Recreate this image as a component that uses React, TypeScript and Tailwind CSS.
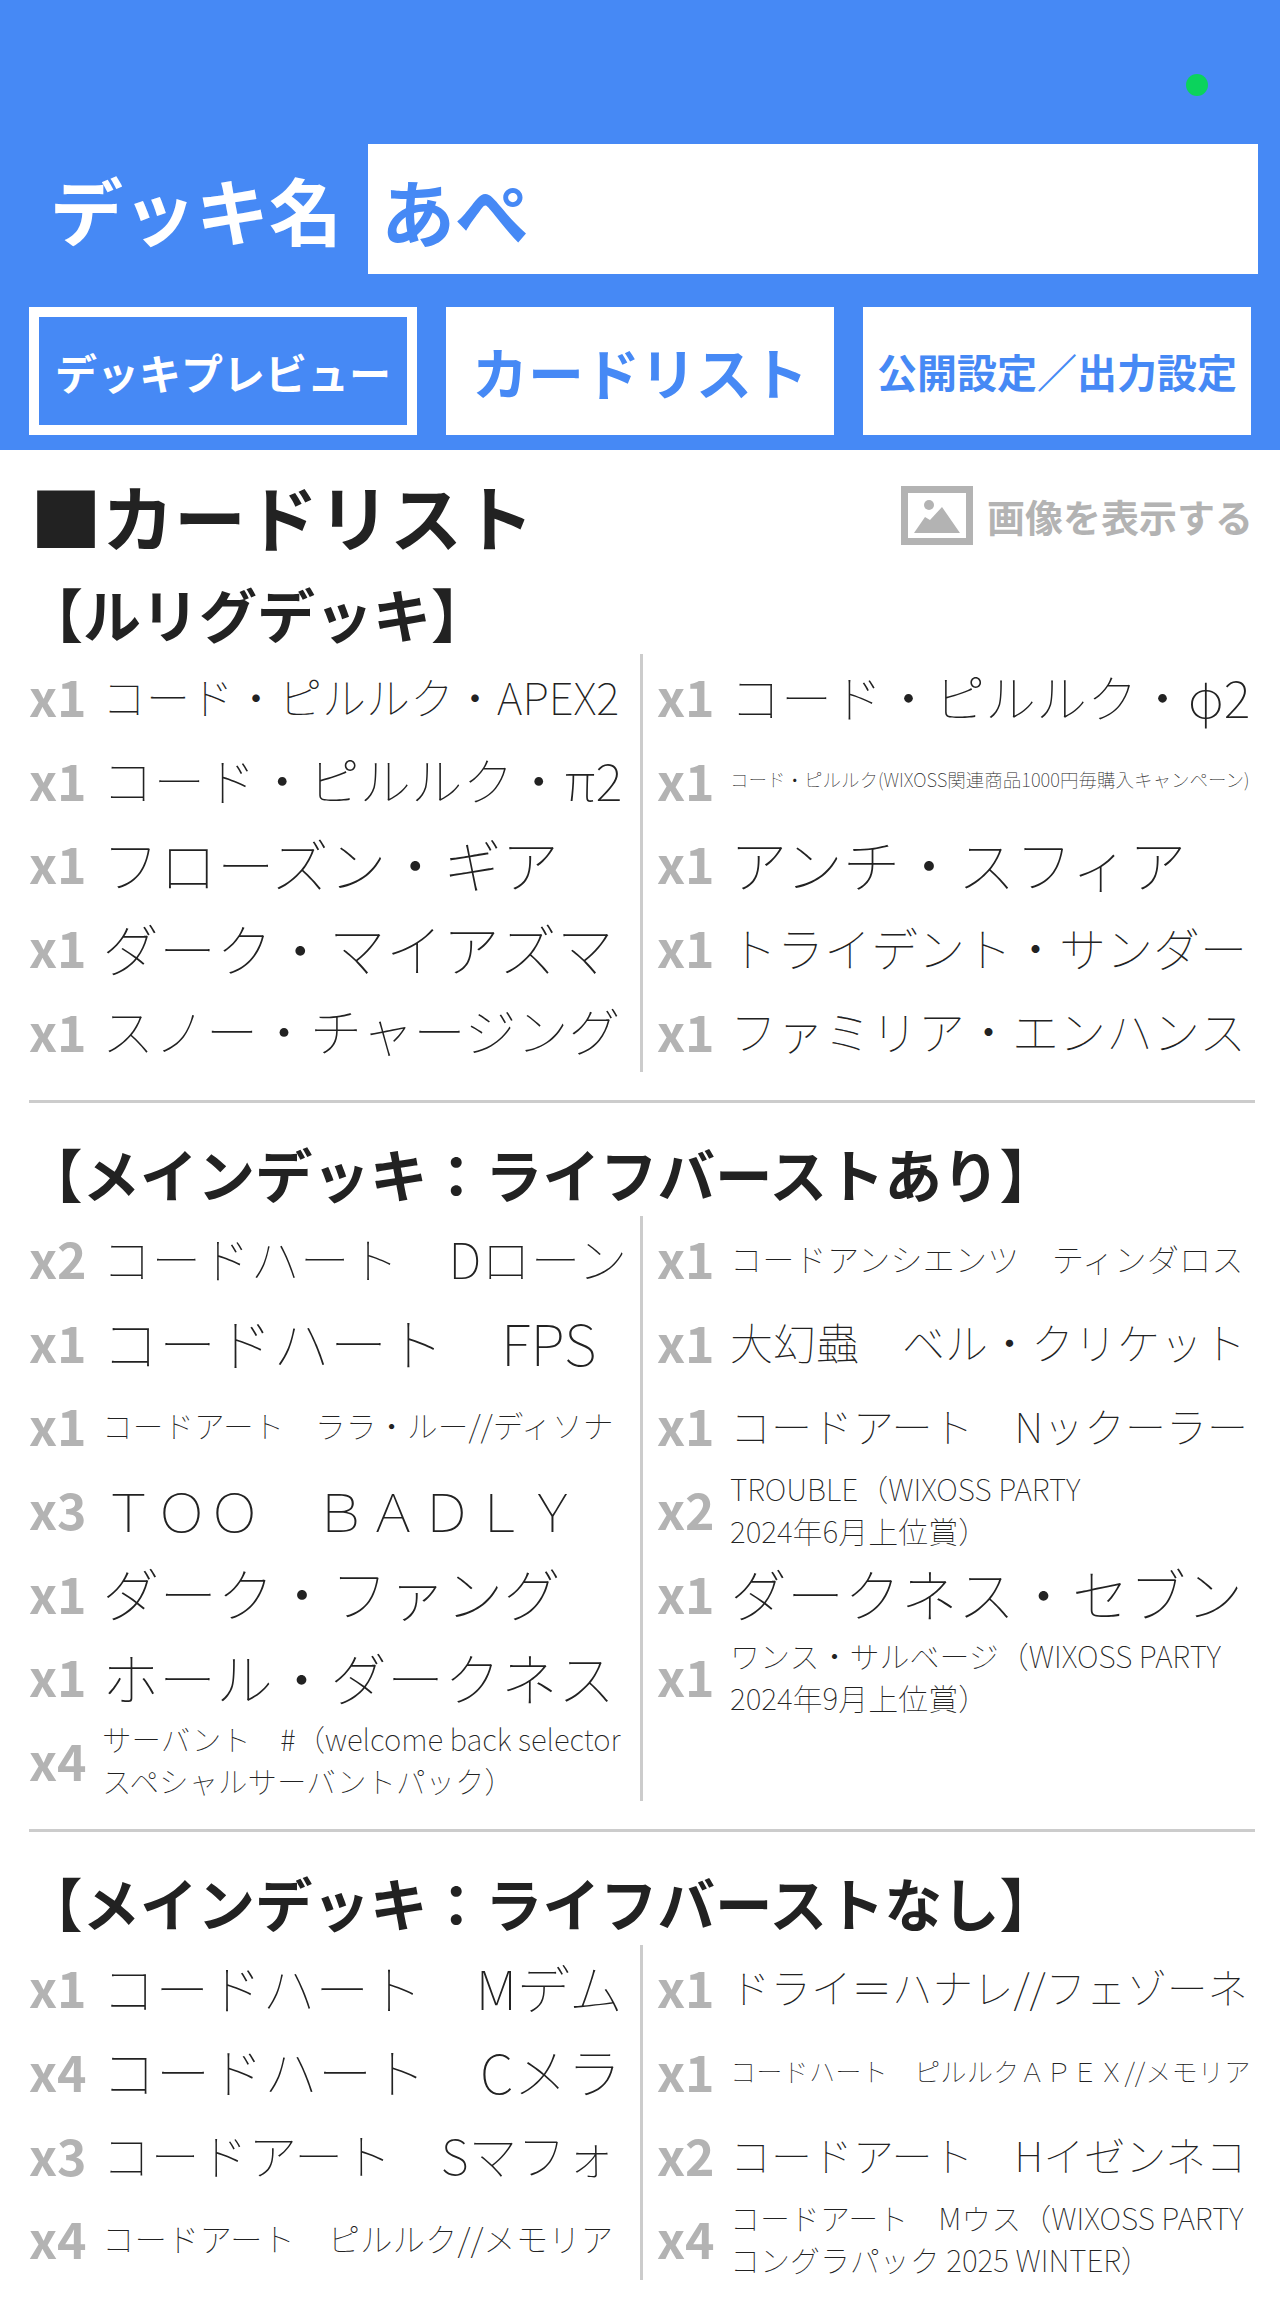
const font = "font-['Noto_Sans_CJK_JP','Noto_Sans',sans-serif]";

type Card = { n: string; t: string; s: string };

const leader: Card[][] = [
  [
    { n: "x1", t: "コード・ピルルク・APEX2", s: "text-[44px]" },
    { n: "x1", t: "コード・ピルルク・π2", s: "text-[51.5px]" },
    { n: "x1", t: "フローズン・ギア", s: "text-[57.5px]" },
    { n: "x1", t: "ダーク・マイアズマ", s: "text-[57px]" },
    { n: "x1", t: "スノー・チャージング", s: "text-[52px]" },
  ],
  [
    { n: "x1", t: "コード・ピルルク・φ2", s: "text-[51px]" },
    { n: "x1", t: "コード・ピルルク(WIXOSS関連商品1000円毎購入キャンペーン)", s: "text-[18.5px]" },
    { n: "x1", t: "アンチ・スフィア", s: "text-[57.5px]" },
    { n: "x1", t: "トライデント・サンダー", s: "text-[47px]" },
    { n: "x1", t: "ファミリア・エンハンス", s: "text-[47px]" },
  ],
];

const withBurst: Card[][] = [
  [
    { n: "x2", t: "コードハート\u3000Dローン", s: "text-[49.5px]" },
    { n: "x1", t: "コードハート\u3000FPS", s: "text-[57px]" },
    { n: "x1", t: "コードアート\u3000ララ・ルー//ディソナ", s: "text-[30.7px]" },
    { n: "x3", t: "\uFF34\uFF2F\uFF2F\u3000\uFF22\uFF21\uFF24\uFF2C\uFF39", s: "text-[53px]" },
    { n: "x1", t: "ダーク・ファング", s: "text-[57.5px]" },
    { n: "x1", t: "ホール・ダークネス", s: "text-[57px]" },
    { n: "x4", t: "サーバント\u3000#\uFF08welcome back selector\nスペシャルサーバントパック\uFF09", s: "text-[29.5px]" },
  ],
  [
    { n: "x1", t: "コードアンシエンツ\u3000ティンダロス", s: "text-[32.3px]" },
    { n: "x1", t: "大幻蟲\u3000ベル・クリケット", s: "text-[43px]" },
    { n: "x1", t: "コードアート\u3000Nックーラー", s: "text-[41px]" },
    { n: "x2", t: "TROUBLE\uFF08WIXOSS PARTY\n2024年6月上位賞\uFF09", s: "text-[30px]" },
    { n: "x1", t: "ダークネス・セブン", s: "text-[57px]" },
    { n: "x1", t: "ワンス・サルベージ\uFF08WIXOSS PARTY\n2024年9月上位賞\uFF09", s: "text-[30px]" },
  ],
];

const noBurst: Card[][] = [
  [
    { n: "x1", t: "コードハート\u3000Mデム", s: "text-[53.4px]" },
    { n: "x4", t: "コードハート\u3000Cメラ", s: "text-[54px]" },
    { n: "x3", t: "コードアート\u3000Sマフォ", s: "text-[48.8px]" },
    { n: "x4", t: "コードアート\u3000ピルルク//メモリア", s: "text-[32.5px]" },
  ],
  [
    { n: "x1", t: "ドライ\uFF1Dハナレ//フェゾーネ", s: "text-[40.5px]" },
    { n: "x1", t: "コードハート\u3000ピルルク\uFF21\uFF30\uFF25\uFF38//メモリア", s: "text-[26.3px]" },
    { n: "x2", t: "コードアート\u3000Hイゼンネコ", s: "text-[41px]" },
    { n: "x4", t: "コードアート\u3000Mウス\uFF08WIXOSS PARTY\nコングラパック 2025 WINTER\uFF09", s: "text-[30px]" },
  ],
];

function Row({ card }: { card: Card }) {
  return (
    <div className="flex h-[83.6px] items-center">
      <span className="w-[73px] shrink-0 text-[50px] font-bold text-[#b3b3b3]">{card.n}</span>
      <span className={`${card.s} min-w-0 whitespace-pre font-thin leading-[42px] text-[#222]`}>{card.t}</span>
    </div>
  );
}

function CardList({ cols }: { cols: Card[][] }) {
  return (
    <div className="flex">
      <div className="w-[614px] shrink-0 border-r-[3px] border-[#ccc]">
        {cols[0].map((c) => (
          <Row key={c.t} card={c} />
        ))}
      </div>
      <div className="flex-1 pl-[14px]">
        {cols[1].map((c) => (
          <Row key={c.t} card={c} />
        ))}
      </div>
    </div>
  );
}

function ImageIcon() {
  return (
    <svg viewBox="0 0 72 59" className="h-[59px] w-[72px]">
      <rect x="3.5" y="3.5" width="65" height="52" fill="none" stroke="#b3b3b3" strokeWidth="7" />
      <circle cx="28" cy="19" r="5" fill="#b3b3b3" />
      <path d="M13 47 L24 31 L29 34 L41 21 L59 47 Z" fill="#b3b3b3" />
    </svg>
  );
}

export default function App() {
  return (
    <div className={`${font} w-[1280px] bg-white`}>
      <div className="relative bg-[#4689f5] pb-[15px] pt-[144px]">
        <span className="absolute left-[1186px] top-[74px] h-[22px] w-[22px] rounded-full bg-[#0bd35c]" />
        <div className="flex h-[130px] items-center pr-[22px]">
          <div className="w-[368px] pl-[50px] text-[73px] font-bold text-white">デッキ名</div>
          <div className="flex h-full flex-1 items-center bg-white pl-[13px] text-[74px] font-bold text-[#4689f5]">
            あぺ
          </div>
        </div>
        <div className="mt-[33px] grid h-[128px] w-[1280px] grid-cols-3 gap-[29px] px-[29px]">
          <button className="flex items-center justify-center whitespace-nowrap border-[10px] border-white text-[42px] font-bold text-white">
            デッキプレビュー
          </button>
          <button className="flex items-center justify-center whitespace-nowrap bg-white text-[56px] font-bold text-[#4689f5]">
            カードリスト
          </button>
          <button className="flex items-center justify-center whitespace-nowrap bg-white text-[40px] font-bold text-[#4689f5]">
            {"公開設定\uFF0F出力設定"}
          </button>
        </div>
      </div>

      <div className="px-[29px]">
        <div className="flex h-[124px] items-center justify-between pl-[1px] pt-[5px]">
          <h1 className="text-[72px] font-bold text-[#222]">■カードリスト</h1>
          <div className="-mr-[2px] flex items-center gap-[14px] pt-[2px]">
            <ImageIcon />
            <span className="text-[38px] font-bold text-[#b3b3b3]">画像を表示する</span>
          </div>
        </div>
        <h2 className="-ml-[4px] flex h-[80px] items-center pb-[2px] text-[58px] font-bold text-[#222]">【ルリグデッキ】</h2>
        <CardList cols={leader} />
        <hr className="mt-[28px] w-[1226px] border-t-[3px] border-[#ccc]" />
        <h2 className="-ml-[4px] flex h-[113px] items-end text-[57.5px] font-bold text-[#222]">{"【メインデッキ\uFF1Aライフバーストあり】"}</h2>
        <CardList cols={withBurst} />
        <hr className="mt-[28px] w-[1226px] border-t-[3px] border-[#ccc]" />
        <h2 className="-ml-[4px] flex h-[113px] items-end text-[57.5px] font-bold text-[#222]">{"【メインデッキ\uFF1Aライフバーストなし】"}</h2>
        <CardList cols={noBurst} />
      </div>
    </div>
  );
}
